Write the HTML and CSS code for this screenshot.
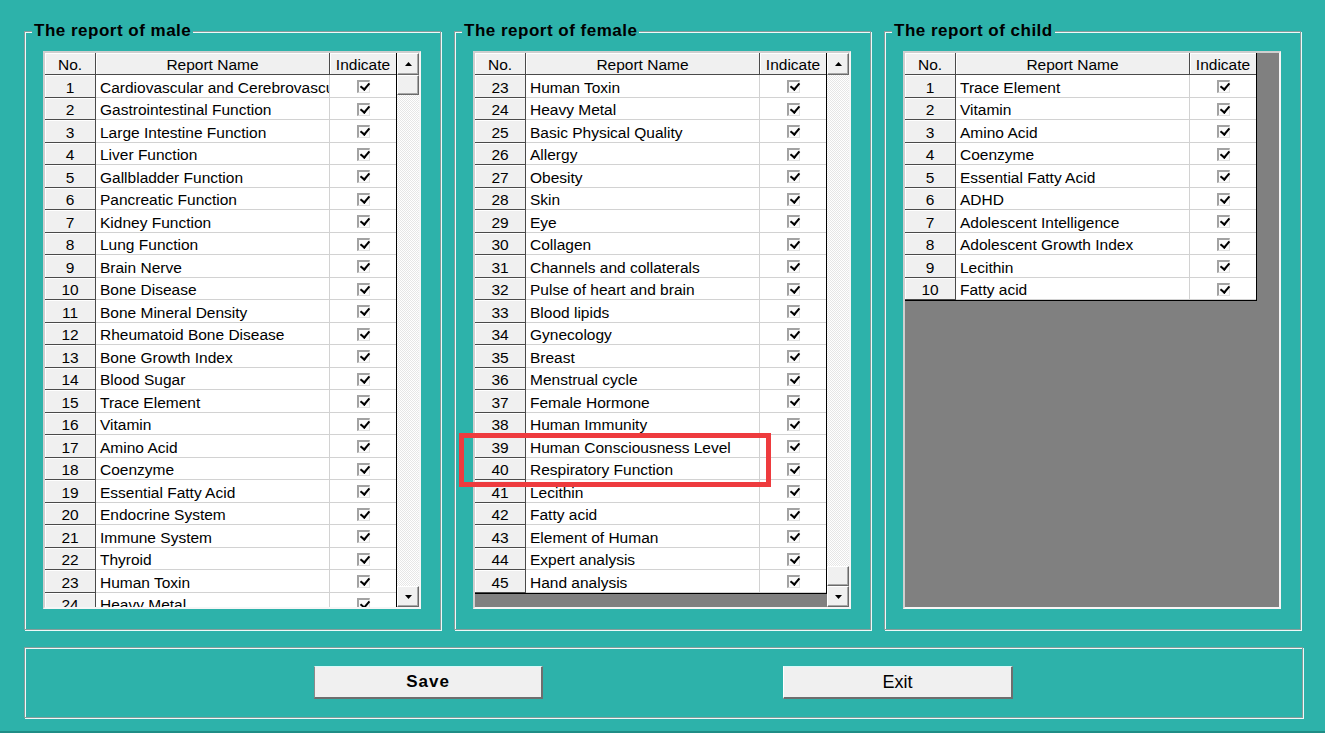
FILE: index.html
```html
<!DOCTYPE html>
<html>
<head>
<meta charset="utf-8">
<title>Report settings</title>
<link rel="stylesheet" href="styles.css">
</head>
<body>
<div class="app">
  <div class="groups">
    <section class="group">
      <div class="title">The report of male</div>
      <div class="gbox">
        <div class="grid">
          <div class="cells">
            <div class="r hd"><span class="c">No.</span><span class="c">Report Name</span><span class="c">Indicate</span></div>
            <div class="r"><span class="c no">1</span><span class="c nm">Cardiovascular and Cerebrovascular</span><span class="c ind"><i class="cb"></i></span></div>
            <div class="r"><span class="c no">2</span><span class="c nm">Gastrointestinal Function</span><span class="c ind"><i class="cb"></i></span></div>
            <div class="r"><span class="c no">3</span><span class="c nm">Large Intestine Function</span><span class="c ind"><i class="cb"></i></span></div>
            <div class="r"><span class="c no">4</span><span class="c nm">Liver Function</span><span class="c ind"><i class="cb"></i></span></div>
            <div class="r"><span class="c no">5</span><span class="c nm">Gallbladder Function</span><span class="c ind"><i class="cb"></i></span></div>
            <div class="r"><span class="c no">6</span><span class="c nm">Pancreatic Function</span><span class="c ind"><i class="cb"></i></span></div>
            <div class="r"><span class="c no">7</span><span class="c nm">Kidney Function</span><span class="c ind"><i class="cb"></i></span></div>
            <div class="r"><span class="c no">8</span><span class="c nm">Lung Function</span><span class="c ind"><i class="cb"></i></span></div>
            <div class="r"><span class="c no">9</span><span class="c nm">Brain Nerve</span><span class="c ind"><i class="cb"></i></span></div>
            <div class="r"><span class="c no">10</span><span class="c nm">Bone Disease</span><span class="c ind"><i class="cb"></i></span></div>
            <div class="r"><span class="c no">11</span><span class="c nm">Bone Mineral Density</span><span class="c ind"><i class="cb"></i></span></div>
            <div class="r"><span class="c no">12</span><span class="c nm">Rheumatoid Bone Disease</span><span class="c ind"><i class="cb"></i></span></div>
            <div class="r"><span class="c no">13</span><span class="c nm">Bone Growth Index</span><span class="c ind"><i class="cb"></i></span></div>
            <div class="r"><span class="c no">14</span><span class="c nm">Blood Sugar</span><span class="c ind"><i class="cb"></i></span></div>
            <div class="r"><span class="c no">15</span><span class="c nm">Trace Element</span><span class="c ind"><i class="cb"></i></span></div>
            <div class="r"><span class="c no">16</span><span class="c nm">Vitamin</span><span class="c ind"><i class="cb"></i></span></div>
            <div class="r"><span class="c no">17</span><span class="c nm">Amino Acid</span><span class="c ind"><i class="cb"></i></span></div>
            <div class="r"><span class="c no">18</span><span class="c nm">Coenzyme</span><span class="c ind"><i class="cb"></i></span></div>
            <div class="r"><span class="c no">19</span><span class="c nm">Essential Fatty Acid</span><span class="c ind"><i class="cb"></i></span></div>
            <div class="r"><span class="c no">20</span><span class="c nm">Endocrine System</span><span class="c ind"><i class="cb"></i></span></div>
            <div class="r"><span class="c no">21</span><span class="c nm">Immune System</span><span class="c ind"><i class="cb"></i></span></div>
            <div class="r"><span class="c no">22</span><span class="c nm">Thyroid</span><span class="c ind"><i class="cb"></i></span></div>
            <div class="r"><span class="c no">23</span><span class="c nm">Human Toxin</span><span class="c ind"><i class="cb"></i></span></div>
            <div class="r"><span class="c no">24</span><span class="c nm">Heavy Metal</span><span class="c ind"><i class="cb"></i></span></div>
          </div>
        </div>
        <div class="vs">
          <div class="sb"><svg width="7" height="4" viewBox="0 0 7 4"><polygon points="0,4 3.5,0 7,4" fill="#000"/></svg></div>
          <div class="sb thumb"></div>
          <div class="sb down"><svg width="7" height="4" viewBox="0 0 7 4"><polygon points="0,0 7,0 3.5,4" fill="#000"/></svg></div>
        </div>
      </div>
    </section>

    <section class="group">
      <div class="title">The report of female</div>
      <div class="gbox">
        <div class="grid">
          <div class="cells">
            <div class="r hd"><span class="c">No.</span><span class="c">Report Name</span><span class="c">Indicate</span></div>
            <div class="r"><span class="c no">23</span><span class="c nm">Human Toxin</span><span class="c ind"><i class="cb"></i></span></div>
            <div class="r"><span class="c no">24</span><span class="c nm">Heavy Metal</span><span class="c ind"><i class="cb"></i></span></div>
            <div class="r"><span class="c no">25</span><span class="c nm">Basic Physical Quality</span><span class="c ind"><i class="cb"></i></span></div>
            <div class="r"><span class="c no">26</span><span class="c nm">Allergy</span><span class="c ind"><i class="cb"></i></span></div>
            <div class="r"><span class="c no">27</span><span class="c nm">Obesity</span><span class="c ind"><i class="cb"></i></span></div>
            <div class="r"><span class="c no">28</span><span class="c nm">Skin</span><span class="c ind"><i class="cb"></i></span></div>
            <div class="r"><span class="c no">29</span><span class="c nm">Eye</span><span class="c ind"><i class="cb"></i></span></div>
            <div class="r"><span class="c no">30</span><span class="c nm">Collagen</span><span class="c ind"><i class="cb"></i></span></div>
            <div class="r"><span class="c no">31</span><span class="c nm">Channels and collaterals</span><span class="c ind"><i class="cb"></i></span></div>
            <div class="r"><span class="c no">32</span><span class="c nm">Pulse of heart and brain</span><span class="c ind"><i class="cb"></i></span></div>
            <div class="r"><span class="c no">33</span><span class="c nm">Blood lipids</span><span class="c ind"><i class="cb"></i></span></div>
            <div class="r"><span class="c no">34</span><span class="c nm">Gynecology</span><span class="c ind"><i class="cb"></i></span></div>
            <div class="r"><span class="c no">35</span><span class="c nm">Breast</span><span class="c ind"><i class="cb"></i></span></div>
            <div class="r"><span class="c no">36</span><span class="c nm">Menstrual cycle</span><span class="c ind"><i class="cb"></i></span></div>
            <div class="r"><span class="c no">37</span><span class="c nm">Female Hormone</span><span class="c ind"><i class="cb"></i></span></div>
            <div class="r"><span class="c no">38</span><span class="c nm">Human Immunity</span><span class="c ind"><i class="cb"></i></span></div>
            <div class="r"><span class="c no">39</span><span class="c nm">Human Consciousness Level</span><span class="c ind"><i class="cb"></i></span></div>
            <div class="r"><span class="c no">40</span><span class="c nm">Respiratory Function</span><span class="c ind"><i class="cb"></i></span></div>
            <div class="r"><span class="c no">41</span><span class="c nm">Lecithin</span><span class="c ind"><i class="cb"></i></span></div>
            <div class="r"><span class="c no">42</span><span class="c nm">Fatty acid</span><span class="c ind"><i class="cb"></i></span></div>
            <div class="r"><span class="c no">43</span><span class="c nm">Element of Human</span><span class="c ind"><i class="cb"></i></span></div>
            <div class="r"><span class="c no">44</span><span class="c nm">Expert analysis</span><span class="c ind"><i class="cb"></i></span></div>
            <div class="r"><span class="c no">45</span><span class="c nm">Hand analysis</span><span class="c ind"><i class="cb"></i></span></div>
          </div>
        </div>
        <div class="vs at-end">
          <div class="sb"><svg width="7" height="4" viewBox="0 0 7 4"><polygon points="0,4 3.5,0 7,4" fill="#000"/></svg></div>
          <div class="sb thumb"></div>
          <div class="sb down"><svg width="7" height="4" viewBox="0 0 7 4"><polygon points="0,0 7,0 3.5,4" fill="#000"/></svg></div>
        </div>
      </div>
      <div class="highlight"></div>
    </section>

    <section class="group">
      <div class="title">The report of child</div>
      <div class="gbox">
        <div class="grid">
          <div class="cells">
            <div class="r hd"><span class="c">No.</span><span class="c">Report Name</span><span class="c">Indicate</span></div>
            <div class="r"><span class="c no">1</span><span class="c nm">Trace Element</span><span class="c ind"><i class="cb"></i></span></div>
            <div class="r"><span class="c no">2</span><span class="c nm">Vitamin</span><span class="c ind"><i class="cb"></i></span></div>
            <div class="r"><span class="c no">3</span><span class="c nm">Amino Acid</span><span class="c ind"><i class="cb"></i></span></div>
            <div class="r"><span class="c no">4</span><span class="c nm">Coenzyme</span><span class="c ind"><i class="cb"></i></span></div>
            <div class="r"><span class="c no">5</span><span class="c nm">Essential Fatty Acid</span><span class="c ind"><i class="cb"></i></span></div>
            <div class="r"><span class="c no">6</span><span class="c nm">ADHD</span><span class="c ind"><i class="cb"></i></span></div>
            <div class="r"><span class="c no">7</span><span class="c nm">Adolescent Intelligence</span><span class="c ind"><i class="cb"></i></span></div>
            <div class="r"><span class="c no">8</span><span class="c nm">Adolescent Growth Index</span><span class="c ind"><i class="cb"></i></span></div>
            <div class="r"><span class="c no">9</span><span class="c nm">Lecithin</span><span class="c ind"><i class="cb"></i></span></div>
            <div class="r"><span class="c no">10</span><span class="c nm">Fatty acid</span><span class="c ind"><i class="cb"></i></span></div>
          </div>
        </div>
      </div>
    </section>
  </div>

  <div class="bottom">
    <button class="btn save">Save</button>
    <button class="btn exit">Exit</button>
  </div>
</div>
</body>
</html>
```
FILE: styles.css
```css
* { box-sizing: border-box; }
html, body { margin: 0; padding: 0; }
body {
  width: 1325px;
  height: 733px;
  overflow: hidden;
  background: #2db2aa;
  font-family: "Liberation Sans", Arial, sans-serif;
  color: #000;
  border-bottom: 2px solid #1f8d86;
}
.app { padding: 31px 0 0 24px; }
.groups { display: flex; gap: 13px; }

.group {
  position: relative;
  width: 417px;
  height: 599px;
  border: 1px solid #889c9a;
  box-shadow: 1px 1px 0 #eefaf9, inset 1px 1px 0 #eefaf9;
  padding-left: 18px;
}
.title {
  width: max-content;
  margin: -11px 0 0 -11px;
  padding: 0 2px;
  background: #2db2aa;
  font-weight: bold;
  font-size: 17px;
  letter-spacing: 0.5px;
  line-height: 20px;
}

.gbox {
  margin-top: 10px;
  width: 378px;
  height: 558px;
  border: 2px solid;
  border-color: #cfcfcf #f6f6f6 #f6f6f6 #cfcfcf;
  display: flex;
  background: #808080;
}
.grid { flex: 1; height: 554px; overflow: hidden; }
.cells {
  width: 352px;
  border-right: 1px solid #000;
  border-bottom: 1px solid #000;
  background: #fff;
}
.r {
  display: grid;
  grid-template-columns: 51px 234px 66px;
  height: 22.5px;
}
.c {
  display: block;
  border-right: 1px solid #d2d2d2;
  border-bottom: 1px solid #d2d2d2;
  font-size: 15.5px;
  line-height: 21.5px;
  padding-top: 1.5px;
  white-space: nowrap;
  overflow: hidden;
}
.c:last-child { border-right: 0; }
.hd { height: 22px; }
.hd .c, .c.no {
  background: #f0f0f0;
  text-align: center;
  border-color: #4a4a4a;
  box-shadow: inset 1px 1px 0 #fff;
}
.hd .c { line-height: 21px; padding-top: 0.5px; }
.hd .c:last-child { border-right: 0; }
.nm { padding-left: 4px; }
.c.ind { display: flex; align-items: center; justify-content: center; padding-top: 1.5px; }
.cb {
  position: relative;
  display: block;
  width: 13px;
  height: 13px;
  border: solid;
  border-width: 2px 1px 1px 2px;
  border-color: #a3a3a3 #e2e2e2 #e2e2e2 #a3a3a3;
  background: #fbfbfb;
}
.cb::after {
  content: "";
  position: absolute;
  left: 3px;
  top: -1px;
  width: 4px;
  height: 7px;
  border: solid #000;
  border-width: 0 2.5px 2.5px 0;
  transform: rotate(40deg);
}

.vs {
  width: 22px;
  height: 554px;
  display: flex;
  flex-direction: column;
  background: repeating-conic-gradient(#ffffff 0 25%, #e6e6e6 0 50%) 0 0 / 2px 2px;
}
.sb {
  height: 22px;
  flex: none;
  background: #f0f0f0;
  border: 1px solid;
  border-color: #ffffff #6a6a6a #6a6a6a #ffffff;
  box-shadow: inset -1px -1px 0 #a8a8a8;
  display: flex;
  align-items: center;
  justify-content: center;
}
.sb svg { display: block; }
.sb.thumb { height: 20px; }
.sb.down { height: 21px; margin-top: auto; }
.vs.at-end .thumb { margin-top: auto; }
.vs.at-end .down { margin-top: 0; }

.highlight {
  position: absolute;
  left: 4px;
  top: 401px;
  width: 312px;
  height: 54px;
  border: 5px solid #ee3b3e;
}

.bottom {
  margin-top: 17px;
  width: 1279px;
  height: 71px;
  border: 1px solid #889c9a;
  box-shadow: 1px 1px 0 #eefaf9, inset 1px 1px 0 #eefaf9;
  display: flex;
  align-items: center;
  justify-content: center;
  gap: 240px;
}
.btn {
  width: 229px;
  height: 33px;
  padding: 0;
  background: #f0f0f0;
  border: 0;
  border-top: 1px solid #d8fbf9;
  border-left: 1px solid #ffffff;
  border-right: 2px solid #6e6e6e;
  border-bottom: 2px solid #6e6e6e;
  font-family: "Liberation Sans", Arial, sans-serif;
  color: #000;
}
.save { font-size: 17px; font-weight: bold; letter-spacing: 1px; border-left-color: #8a8a8a; }
.exit { width: 230px; font-size: 18px; }
```
